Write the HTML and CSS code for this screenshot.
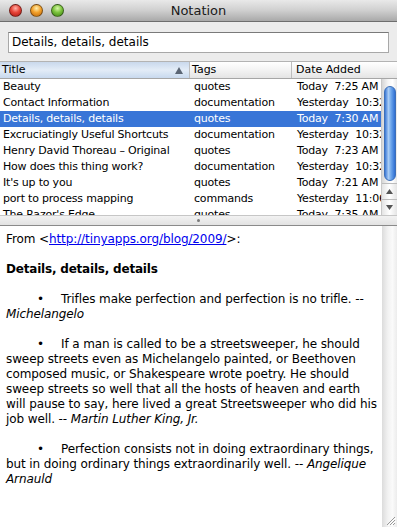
FILE: index.html
```html
<!DOCTYPE html>
<html lang="en">
<head>
  <meta charset="UTF-8">
  <title>Notation</title>
  <link rel="stylesheet" href="styles.css">
</head>
<body>
  <div class="window">
    <div class="titlebar">
      <div class="lights">
        <span class="light red"></span>
        <span class="light yellow"></span>
        <span class="light green"></span>
      </div>
      <div class="title">Notation</div>
    </div>

    <div class="toolbar">
      <div class="search">Details, details, details</div>
    </div>

    <div class="header">
      <div class="hcell col-title sorted">Title<span class="sort-arrow"></span></div>
      <div class="hcell col-tags">Tags</div>
      <div class="hcell col-date">Date Added</div>
    </div>

    <div class="table-pane">
      <div class="rows">
        <div class="row"><span class="col-title">Beauty</span><span class="col-tags">quotes</span><span class="col-date">Today  7:25 AM</span></div>
        <div class="row"><span class="col-title">Contact Information</span><span class="col-tags">documentation</span><span class="col-date">Yesterday  10:32 PM</span></div>
        <div class="row selected"><span class="col-title">Details, details, details</span><span class="col-tags">quotes</span><span class="col-date">Today  7:30 AM</span></div>
        <div class="row"><span class="col-title">Excruciatingly Useful Shortcuts</span><span class="col-tags">documentation</span><span class="col-date">Yesterday  10:32 PM</span></div>
        <div class="row"><span class="col-title">Henry David Thoreau – Original</span><span class="col-tags">quotes</span><span class="col-date">Today  7:23 AM</span></div>
        <div class="row"><span class="col-title">How does this thing work?</span><span class="col-tags">documentation</span><span class="col-date">Yesterday  10:32 PM</span></div>
        <div class="row"><span class="col-title">It's up to you</span><span class="col-tags">quotes</span><span class="col-date">Today  7:21 AM</span></div>
        <div class="row"><span class="col-title">port to process mapping</span><span class="col-tags">commands</span><span class="col-date">Yesterday  11:06 PM</span></div>
        <div class="row"><span class="col-title">The Razor's Edge</span><span class="col-tags">quotes</span><span class="col-date">Today  7:35 AM</span></div>
      </div>
      <div class="vscroll">
        <div class="track"><div class="thumb"></div></div>
        <div class="arrow">
          <svg width="9" height="7" viewBox="0 0 9 7"><path d="M4.5 1 L8 6 L1 6 Z" fill="#555"/></svg>
        </div>
        <div class="arrow">
          <svg width="9" height="7" viewBox="0 0 9 7"><path d="M1 1 L8 1 L4.5 6 Z" fill="#555"/></svg>
        </div>
      </div>
    </div>

    <div class="splitter"><span class="dimple"></span></div>

    <div class="text-pane">
      <div class="note">
        <p>From &lt;<a href="#">http://tinyapps.org/blog/2009/</a>&gt;:</p>
        <p><b>Details, details, details</b></p>
        <p><span class="bullet">•</span>Trifles make perfection and perfection is no trifle. -- <i>Michelangelo</i></p>
        <p><span class="bullet">•</span>If a man is called to be a streetsweeper, he should sweep streets even as Michelangelo painted, or Beethoven composed music, or Shakespeare wrote poetry. He should sweep streets so well that all the hosts of heaven and earth will pause to say, here lived a great Streetsweeper who did his job well. -- <i>Martin Luther King, Jr.</i></p>
        <p><span class="bullet">•</span>Perfection consists not in doing extraordinary things, but in doing ordinary things extraordinarily well. -- <i>Angelique Arnauld</i></p>
      </div>
      <div class="vscroll-empty">
        <svg class="grip" width="12" height="12" viewBox="0 0 12 12">
          <path d="M11 3 L3 11 M11 6 L6 11 M11 9 L9 11" stroke="#999" stroke-width="1"/>
          <path d="M12 4 L4 12 M12 7 L7 12" stroke="#fff" stroke-width="1"/>
        </svg>
      </div>
    </div>
  </div>
</body>
</html>
```

FILE: styles.css
```css
body {
  margin: 0;
  font-family: 'DejaVu Sans', sans-serif;
  background: #ececec;
}
.window {
  width: 397px;
  height: 527px;
  display: flex;
  flex-direction: column;
  overflow: hidden;
}

/* title bar */
.titlebar {
  height: 21px;
  border-bottom: 1px solid #6e6e6e;
  background: linear-gradient(#e9e9e9, #cfcfcf 50%, #a9a9a9);
  display: flex;
  align-items: center;
  position: relative;
}
.lights {
  display: flex;
  gap: 8px;
  padding-left: 9px;
}
.light {
  width: 13px;
  height: 13px;
  border-radius: 50%;
  box-sizing: border-box;
  border: 1px solid rgba(0, 0, 0, 0.45);
}
.red {
  background: radial-gradient(circle at 50% 30%, #ffb2a8 0%, #e8463a 45%, #a6170f 100%);
}
.yellow {
  background: radial-gradient(circle at 50% 30%, #fff0b0 0%, #f3a22c 45%, #b9630a 100%);
}
.green {
  background: radial-gradient(circle at 50% 30%, #d8f7a8 0%, #7cc43e 45%, #3c7e14 100%);
}
.title {
  position: absolute;
  left: 0;
  right: 0;
  text-align: center;
  font-size: 13px;
  color: #1a1a1a;
}

/* toolbar with search field */
.toolbar {
  height: 39px;
  box-sizing: border-box;
  padding: 10px 8px 0 8px;
  background: #ececec;
}
.search {
  height: 21px;
  box-sizing: border-box;
  border: 1px solid #a8a8a8;
  border-top-color: #7a7a7a;
  background: #fff;
  font-size: 12px;
  line-height: 19px;
  padding-left: 3px;
  color: #000;
}

/* table */
.header {
  height: 16px;
  display: flex;
  border-top: 1px solid #b3b3b3;
  border-bottom: 1px solid #a6a6a6;
  background: linear-gradient(#ffffff, #f3f3f3 50%, #e4e4e4);
  font-size: 11px;
  line-height: 16px;
}
.hcell {
  box-sizing: border-box;
  border-right: 1px solid #bdbdbd;
  color: #000;
  white-space: nowrap;
  overflow: hidden;
}
.header .col-title {
  width: 190px;
  padding-left: 2px;
  position: relative;
}
.header .col-tags {
  width: 102px;
  padding-left: 2px;
}
.header .col-date {
  flex: 1;
  padding-left: 4px;
  border-right: none;
}
.sorted {
  background: linear-gradient(#c9d8ec, #e3ecf7 50%, #c8d9ee);
}
.sort-arrow {
  position: absolute;
  right: 6px;
  top: 5px;
  width: 0;
  height: 0;
  border-left: 4px solid transparent;
  border-right: 4px solid transparent;
  border-bottom: 7px solid #5b6675;
}

.table-pane {
  height: 136px;
  display: flex;
  background: #fff;
  overflow: hidden;
}
.rows {
  width: 382px;
  overflow: hidden;
}
.row {
  height: 16px;
  display: flex;
  font-size: 11px;
  line-height: 16px;
  letter-spacing: -0.2px;
  color: #000;
  white-space: pre;
}
.row span {
  overflow: hidden;
  box-sizing: border-box;
  flex-shrink: 0;
}
.row .col-title {
  width: 190px;
  padding-left: 3px;
}
.row .col-tags {
  width: 102px;
  padding-left: 4px;
}
.row .col-date {
  width: 90px;
  padding-left: 5px;
}
.row.selected {
  background: #3875d7;
  color: #fff;
}

/* table scrollbar */
.vscroll {
  width: 15px;
  display: flex;
  flex-direction: column;
  border-left: 1px solid #c8c8c8;
  background: linear-gradient(90deg, #d6d6d6, #f5f5f5 40%, #ffffff 70%, #e8e8e8);
}
.track {
  flex: 1;
  padding: 7px 1px 0 2px;
}
.thumb {
  height: 95px;
  border-radius: 6px;
  box-sizing: border-box;
  border: 1px solid #3d6fb8;
  background: linear-gradient(90deg, #3a78d6, #a9ccf5 35%, #6ea7ec 60%, #2f6fd3);
}
.arrow {
  height: 15px;
  display: flex;
  align-items: center;
  justify-content: center;
  border-top: 1px solid #bcbcbc;
  background: linear-gradient(90deg, #e4e4e4, #ffffff 50%, #e4e4e4);
}

/* split view divider */
.splitter {
  height: 9px;
  border-top: 1px solid #c6c6c6;
  border-bottom: 1px solid #8a8a8a;
  background: linear-gradient(#f2f2f2, #e2e2e2);
  display: flex;
  justify-content: center;
  align-items: center;
}
.dimple {
  width: 3px;
  height: 3px;
  border-radius: 50%;
  background: #7a7a7a;
}

/* note text */
.text-pane {
  flex: 1;
  display: flex;
  background: #fff;
}
.note {
  flex: 1;
  padding: 6px 2px 0 6px;
  font-size: 12px;
  line-height: 15px;
  letter-spacing: -0.1px;
  color: #000;
}
.note p {
  margin: 0 0 15px 0;
}
.note b {
  letter-spacing: -0.2px;
}
.note a {
  color: #0000ee;
}
.bullet {
  display: inline-block;
  width: 24px;
  margin-left: 31px;
}
.vscroll-empty {
  width: 15px;
  position: relative;
  background: linear-gradient(90deg, #dcdcdc, #f2f2f2 40%, #fafafa 70%, #ececec);
}
.grip {
  position: absolute;
  right: 1px;
  bottom: 1px;
}
```
